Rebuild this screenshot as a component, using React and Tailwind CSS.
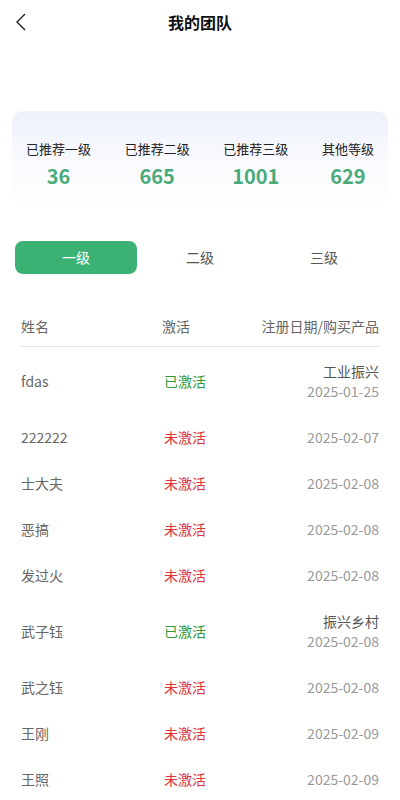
import { useState } from "react";

const stats = [
  { label: "已推荐一级", value: 36 },
  { label: "已推荐二级", value: 665 },
  { label: "已推荐三级", value: 1001 },
  { label: "其他等级", value: 629 },
];

const members = [
  { name: "fdas", active: true, product: "工业振兴", date: "2025-01-25" },
  { name: "222222", active: false, date: "2025-02-07" },
  { name: "士大夫", active: false, date: "2025-02-08" },
  { name: "恶搞", active: false, date: "2025-02-08" },
  { name: "发过火", active: false, date: "2025-02-08" },
  { name: "武子钰", active: true, product: "振兴乡村", date: "2025-02-08" },
  { name: "武之钰", active: false, date: "2025-02-08" },
  { name: "王刚", active: false, date: "2025-02-09" },
  { name: "王照", active: false, date: "2025-02-09" },
];

const tabs = ["一级", "二级", "三级"];

export default function App() {
  const [tab, setTab] = useState(0);

  return (
    <div
      className="min-h-screen bg-white"
      style={{ fontFamily: '"Noto Sans CJK SC", "Noto Sans", sans-serif' }}
    >
      {/* Header */}
      <div className="relative flex h-11 items-center justify-center">
        <button className="absolute left-[12px] top-[10px] p-0.5">
          <svg width="14" height="20" viewBox="0 0 14 20" fill="none">
            <polyline points="11,2 3,10 11,18" stroke="#222" strokeWidth="1.4" />
          </svg>
        </button>
        <h1 className="text-[16px] font-bold text-[#111]">我的团队</h1>
      </div>

      {/* Stats card */}
      <div className="mx-3 mt-[67px] rounded-xl bg-gradient-to-b from-[#edf1fb] via-[#f9fafe] to-white px-[14px] pb-5 pt-[28px]">
        <div className="flex justify-between">
          {stats.map((s) => (
            <div key={s.label} className="flex flex-col items-center">
              <span className="text-[13px] leading-5 text-[#222]">{s.label}</span>
              <span className="mt-[5px] text-[20px] font-bold leading-6 text-[#4aab7a]">{s.value}</span>
            </div>
          ))}
        </div>
      </div>

      {/* Tabs */}
      <div className="mx-[15px] mt-[33px] grid grid-cols-3 gap-[2px]">
        {tabs.map((t, i) => (
          <button
            key={t}
            onClick={() => setTab(i)}
            className={
              i === tab
                ? "h-[33px] rounded-lg bg-[#3bb273] text-[14px] text-white"
                : "h-[33px] rounded-lg text-[14px] text-[#555]"
            }
          >
            {t}
          </button>
        ))}
      </div>

      {/* Table */}
      <div className="mx-[21px] mt-[42px]">
        <div className="flex items-center border-b border-[#e4e4e4] pb-[10px] text-[14px] leading-5 text-[#666]">
          <span className="w-[141px]">姓名</span>
          <span className="flex-1">激活</span>
          <span>注册日期/购买产品</span>
        </div>
        <div className="pt-[1px]">
          {members.map((m, i) => (
            <div key={i} className="flex items-center py-[13px] text-[14px] leading-5">
              <span className="w-[143px] text-[#666]">{m.name}</span>
              <span className={m.active ? "flex-1 text-[#2f9a3b]" : "flex-1 text-[#e2333b]"}>
                {m.active ? "已激活" : "未激活"}
              </span>
              <div className="flex flex-col items-end">
                {m.product && <span className="text-[#555]">{m.product}</span>}
                <span className="text-[#999]">{m.date}</span>
              </div>
            </div>
          ))}
        </div>
      </div>
    </div>
  );
}
